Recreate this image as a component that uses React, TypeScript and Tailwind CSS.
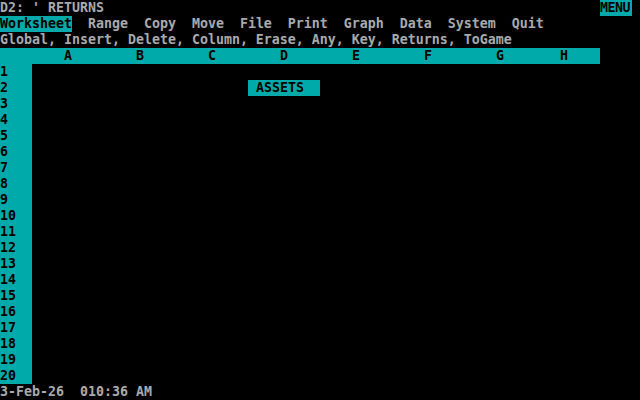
import React from "react";

const cols = ["A", "B", "C", "D", "E", "F", "G"];

export default function App() {
  const rows = Array.from({ length: 20 }, (_, i) => i + 1);
  return (
    <div className="w-[640px] h-[400px] bg-black text-[#aaaaaa] font-['DejaVu_Sans_Mono',monospace] font-bold text-[13.29px] leading-4 whitespace-pre overflow-hidden flex flex-col">
      <div className="h-4 flex">
        <span className="flex-1">D2: ' RETURNS</span>
        <span className="w-8 bg-[#00aaaa] text-black tracking-[-0.5px]">MENU</span>
        <span className="w-2" />
      </div>
      <div className="h-4 flex">
        <span className="bg-[#00aaaa] text-black">Worksheet</span>
        <span>  Range  Copy  Move  File  Print  Graph  Data  System  Quit</span>
      </div>
      <div className="h-4">Global, Insert, Delete, Column, Erase, Any, Key, Returns, ToGame</div>
      <div className="h-4 flex">
        <div className="w-[600px] bg-[#00aaaa] text-black flex">
          <div className="w-8" />
          {cols.map((c) => (
            <div key={c} className="w-[72px] pl-8">{c}</div>
          ))}
          <div className="w-16 pl-6">H</div>
        </div>
      </div>
      {rows.map((r) => (
        <div key={r} className="h-4 flex">
          <div className="w-8 bg-[#00aaaa] text-black">{r}</div>
          {r === 2 ? (
            <div className="flex">
              <div className="w-[216px]" />
              <div className="w-[72px] bg-[#00aaaa] text-black pl-2">ASSETS</div>
            </div>
          ) : null}
        </div>
      ))}
      <div className="h-4">3-Feb-26  010:36 AM</div>
    </div>
  );
}
